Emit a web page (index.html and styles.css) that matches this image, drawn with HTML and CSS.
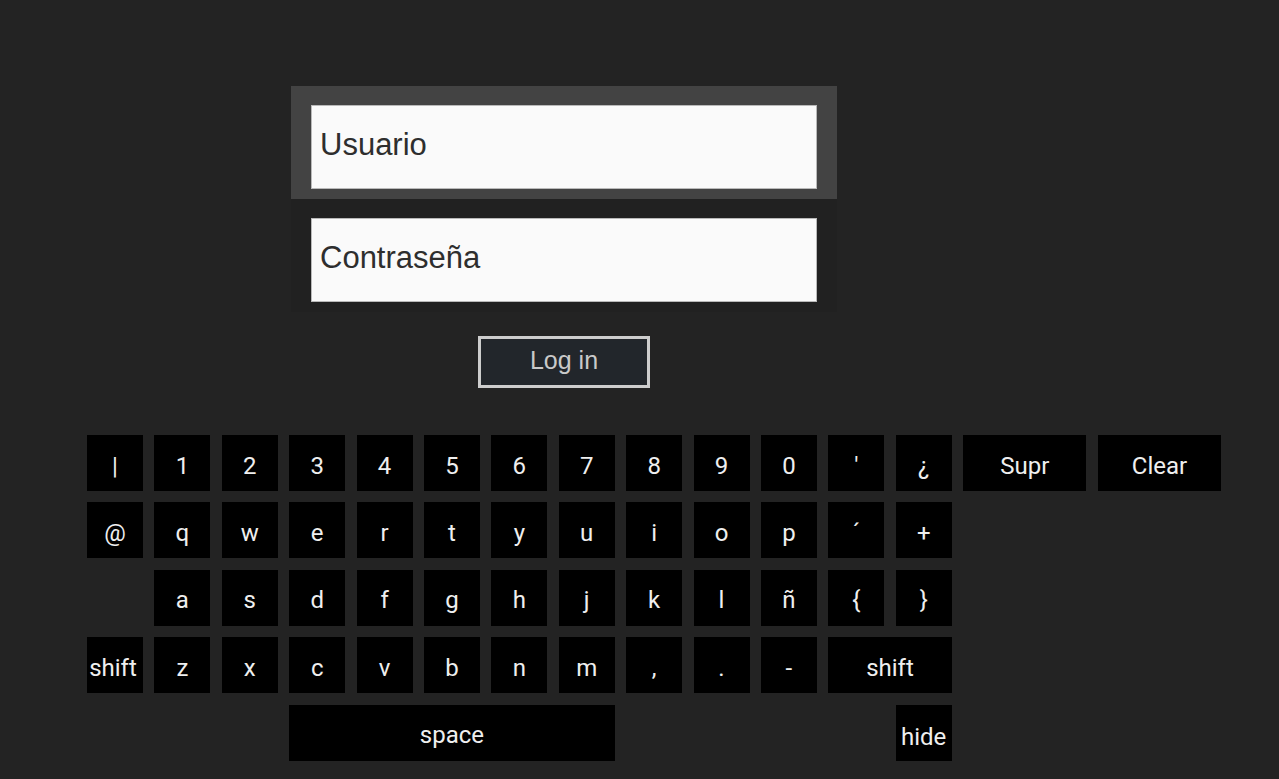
FILE: index.html
```html
<!DOCTYPE html>
<html lang="es">
<head>
<meta charset="utf-8">
<title>Login</title>
<link rel="stylesheet" href="styles.css">
</head>
<body>
<main class="screen">
  <section class="form">
    <div class="field-panel focused">
      <div class="field">Usuario</div>
    </div>
    <div class="field-panel">
      <div class="field">Contraseña</div>
    </div>
    <div class="actions">
      <button class="login">Log in</button>
    </div>
  </section>
  <section class="keyboard">
    <div class="key">|</div>
    <div class="key">1</div>
    <div class="key">2</div>
    <div class="key">3</div>
    <div class="key">4</div>
    <div class="key">5</div>
    <div class="key">6</div>
    <div class="key">7</div>
    <div class="key">8</div>
    <div class="key">9</div>
    <div class="key">0</div>
    <div class="key">'</div>
    <div class="key">¿</div>
    <div class="key wide2">Supr</div>
    <div class="key wide2">Clear</div>

    <div class="key row-start">@</div>
    <div class="key">q</div>
    <div class="key">w</div>
    <div class="key">e</div>
    <div class="key">r</div>
    <div class="key">t</div>
    <div class="key">y</div>
    <div class="key">u</div>
    <div class="key">i</div>
    <div class="key">o</div>
    <div class="key">p</div>
    <div class="key">´</div>
    <div class="key">+</div>

    <div class="key col2">a</div>
    <div class="key">s</div>
    <div class="key">d</div>
    <div class="key">f</div>
    <div class="key">g</div>
    <div class="key">h</div>
    <div class="key">j</div>
    <div class="key">k</div>
    <div class="key">l</div>
    <div class="key">ñ</div>
    <div class="key">{</div>
    <div class="key">}</div>

    <div class="key row-start tight">shift</div>
    <div class="key">z</div>
    <div class="key">x</div>
    <div class="key">c</div>
    <div class="key">v</div>
    <div class="key">b</div>
    <div class="key">n</div>
    <div class="key">m</div>
    <div class="key">,</div>
    <div class="key">.</div>
    <div class="key">-</div>
    <div class="key wide2">shift</div>

    <div class="key space">space</div>
    <div class="key hide">hide</div>
  </section>
</main>
</body>
</html>
```

FILE: styles.css
```css
html, body {
  margin: 0;
  padding: 0;
  background: #232323;
  width: 1279px;
  height: 779px;
  overflow: hidden;
}

.screen {
  display: flex;
  flex-direction: column;
  padding-top: 86px;
}

.form {
  margin-left: 291px;
  width: 546px;
  display: flex;
  flex-direction: column;
}

.field-panel {
  padding: 19px 20px 10px 20px;
  background: #212121;
}

.field-panel.focused {
  background: #434343;
}

.field {
  border: 1px solid #b9b9b9;
  background: #fafafa;
  color: #2e2e2e;
  font-family: "Liberation Sans", Arial, sans-serif;
  font-size: 31px;
  display: flex;
  align-items: center;
  padding-left: 8px;
  padding-bottom: 5px;
  box-sizing: border-box;
  height: 84px;
}

.actions {
  display: flex;
  justify-content: center;
  padding-top: 24px;
}

.login {
  width: 172px;
  height: 52px;
  margin: 0;
  border: 3px solid #cdcdcd;
  background: #22262b;
  color: #c9c9c9;
  font-family: "Liberation Sans", Arial, sans-serif;
  font-size: 25px;
  padding: 0 0 4px 0;
  box-sizing: border-box;
}

.keyboard {
  margin-top: 47px;
  margin-left: 87px;
  display: grid;
  grid-template-columns: repeat(17, 56px);
  grid-auto-rows: 56px;
  gap: 11.4px;
}

.key {
  background: #000;
  color: #efefef;
  font-family: Roboto, "Noto Sans", sans-serif;
  font-size: 24px;
  display: flex;
  align-items: center;
  justify-content: center;
  padding-top: 5px;
  box-sizing: border-box;
}

.tight {
  padding-right: 4px;
}

.wide2 {
  grid-column: span 2;
}

.row-start {
  grid-column: 1;
}

.col2 {
  grid-column: 2;
}

.space {
  grid-column: 4 / span 5;
}

.hide {
  grid-column: 13;
  padding-top: 8px;
}
```
